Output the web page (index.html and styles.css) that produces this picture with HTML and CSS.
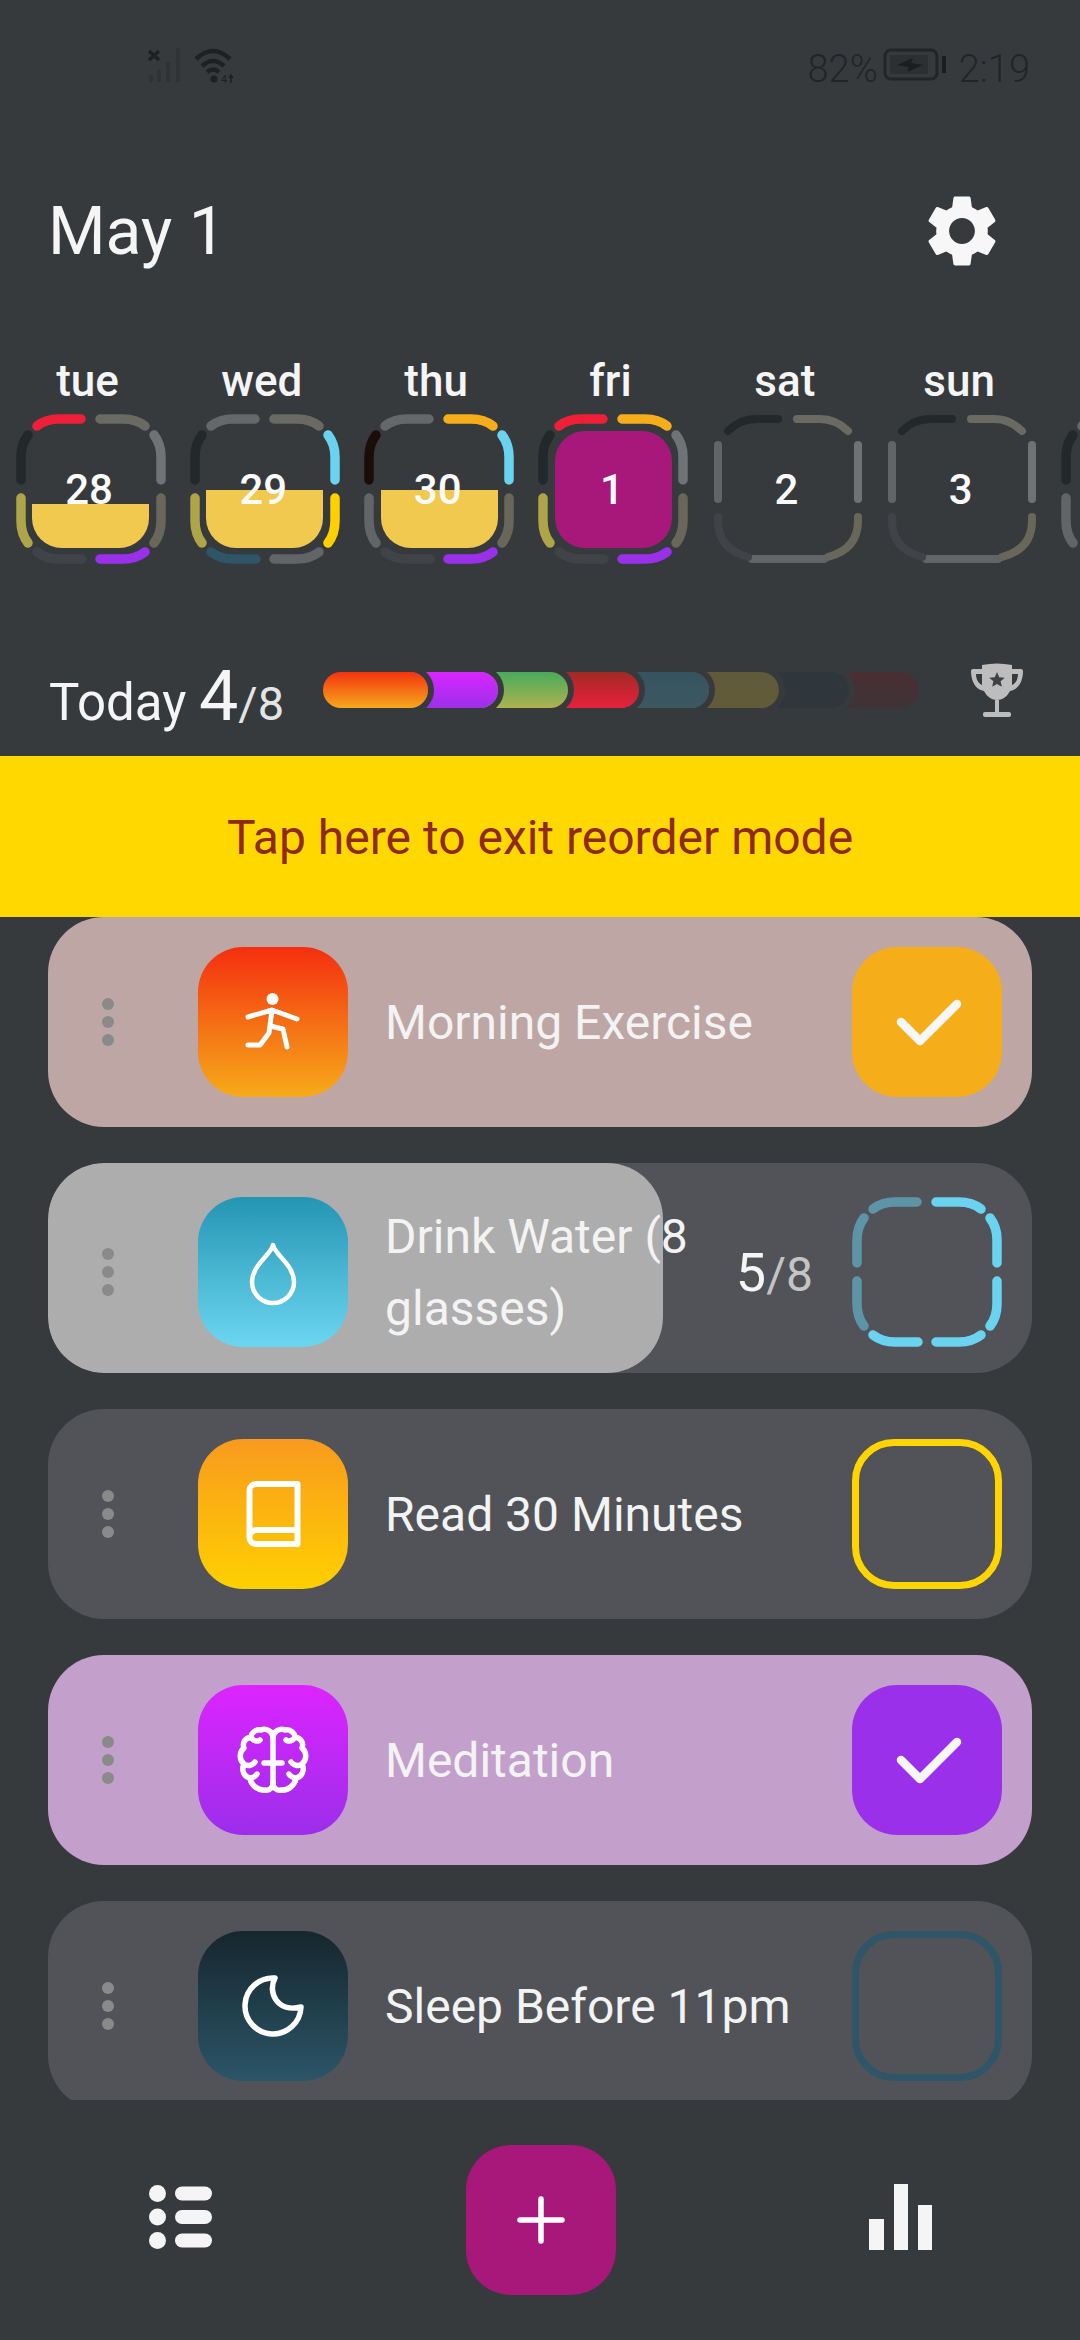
FILE: index.html
```html
<!DOCTYPE html>
<html lang="en">
<head>
  <meta charset="UTF-8">
  <title>Habits</title>
  <link rel="stylesheet" href="styles.css">
</head>
<body>
  <!-- ring pieces, shared by the day rings and the water check box -->
  <svg class="defs">
    <defs>
      <path id="a1" d="M21 12Q30 5 43 5H65"/>
      <path id="a2" d="M84 5H107Q120 5 129 12"/>
      <path id="a3" d="M138 21Q145 30 145 43V66"/>
      <path id="a4" d="M145 84V107Q145 120 138 129"/>
      <path id="a5" d="M129 138Q120 145 107 145H84"/>
      <path id="a6" d="M66 145H43Q30 145 21 138"/>
      <path id="a7" d="M12 129Q5 120 5 107V84"/>
      <path id="a8" d="M5 66V43Q5 30 12 21"/>
      <path id="b1" d="M15 17Q27 5 43 5H65"/>
      <path id="b2" d="M84 5H107Q123 5 135 17"/>
      <path id="b3" d="M145 31V85"/>
      <path id="b4" d="M145 103V107Q145 135 115 143"/>
      <path id="b5" d="M111 145H39"/>
      <path id="b6" d="M35 143Q5 135 5 107V103"/>
      <path id="b7" d="M5 85V31"/>
    </defs>
  </svg>

  <div class="status">
    <svg class="status-left" width="120" height="50" viewBox="0 0 120 50">
      <path class="sig-x" d="M19 11L29 20M29 11L19 20"/>
      <rect class="sig-bar" x="19" y="35" width="4" height="7"/>
      <rect class="sig-bar" x="27" y="30" width="4" height="12"/>
      <rect class="sig-bar" x="36" y="22" width="4" height="20"/>
      <rect class="sig-bar" x="46" y="8" width="4" height="34"/>
      <path class="wifi" d="M66 19Q83 3 100 19M72 26Q83 16 94 26M77 32Q83 27 89 32"/>
      <circle class="wifi-dot" cx="84" cy="39" r="3.5"/>
      <text class="wifi-tag" x="91" y="43">4</text>
      <path class="wifi-arrow" d="M101 35V43M99 38L101 35L103 38"/>
    </svg>
    <div class="status-right">
      <span>82%</span>
      <svg class="batt-icon" width="64" height="34" viewBox="0 0 64 34">
        <rect class="batt" x="2" y="2" width="52" height="29" rx="6"/>
        <rect class="batt-fill" x="7" y="7" width="38" height="19"/>
        <path class="batt-bolt" d="M14 17L30 10L28 15L40 17L24 24L26 19Z"/>
        <rect class="batt-tip" x="59" y="8" width="4" height="17"/>
      </svg>
      <span>2:19</span>
    </div>
  </div>

  <div class="header">
    <h1>May 1</h1>
    <svg class="gear" width="86" height="86" viewBox="0 0 24 24"><path d="M19.14 12.94c.04-.3.06-.61.06-.94 0-.32-.02-.64-.07-.94l2.03-1.58c.18-.14.23-.41.12-.61l-1.92-3.32c-.12-.22-.37-.29-.59-.22l-2.39.96c-.5-.38-1.03-.7-1.62-.94l-.36-2.54c-.04-.24-.24-.41-.48-.41h-3.84c-.24 0-.43.17-.47.41l-.36 2.54c-.59.24-1.13.57-1.62.94l-2.39-.96c-.22-.08-.47 0-.59.22L2.74 8.87c-.12.21-.08.47.12.61l2.03 1.58c-.05.3-.09.63-.09.94s.02.64.07.94l-2.03 1.58c-.18.14-.23.41-.12.61l1.92 3.32c.12.22.37.29.59.22l2.39-.96c.5.38 1.03.7 1.62.94l.36 2.54c.05.24.24.41.48.41h3.84c.24 0 .44-.17.47-.41l.36-2.54c.59-.24 1.13-.56 1.62-.94l2.39.96c.22.08.47 0 .59-.22l1.92-3.32c.12-.22.07-.47-.12-.61l-2.01-1.58zM12 15.6c-1.98 0-3.6-1.62-3.6-3.6s1.62-3.6 3.6-3.6 3.6 1.62 3.6 3.6-1.62 3.6-3.6 3.6z"/></svg>
  </div>

  <div class="days">
    <div class="day">
      <div class="day-name">tue</div>
      <div class="day-ring">
        <svg class="ring" viewBox="0 0 150 150">
          <use href="#a1" class="red"/><use href="#a2" class="olive"/><use href="#a3" class="steel"/><use href="#a4" class="khaki"/>
          <use href="#a5" class="purple"/><use href="#a6" class="faint"/><use href="#a7" class="lime"/><use href="#a8" class="coal"/>
        </svg>
        <div class="day-inner"><div class="day-fill" style="height:44px"></div></div>
        <div class="day-num">28</div>
      </div>
    </div>
    <div class="day">
      <div class="day-name">wed</div>
      <div class="day-ring">
        <svg class="ring" viewBox="0 0 150 150">
          <use href="#a1" class="ash"/><use href="#a2" class="olive"/><use href="#a3" class="sky"/><use href="#a4" class="gold"/>
          <use href="#a5" class="grey"/><use href="#a6" class="navy"/><use href="#a7" class="lime"/><use href="#a8" class="coal"/>
        </svg>
        <div class="day-inner"><div class="day-fill" style="height:58px"></div></div>
        <div class="day-num">29</div>
      </div>
    </div>
    <div class="day">
      <div class="day-name">thu</div>
      <div class="day-ring">
        <svg class="ring" viewBox="0 0 150 150">
          <use href="#a1" class="ash"/><use href="#a2" class="orange"/><use href="#a3" class="sky"/><use href="#a4" class="khaki"/>
          <use href="#a5" class="purple"/><use href="#a6" class="faint"/><use href="#a7" class="grey"/><use href="#a8" class="black"/>
        </svg>
        <div class="day-inner"><div class="day-fill" style="height:58px"></div></div>
        <div class="day-num">30</div>
      </div>
    </div>
    <div class="day">
      <div class="day-name">fri</div>
      <div class="day-ring">
        <svg class="ring" viewBox="0 0 150 150">
          <use href="#a1" class="red"/><use href="#a2" class="orange"/><use href="#a3" class="steel"/><use href="#a4" class="khaki"/>
          <use href="#a5" class="purple"/><use href="#a6" class="faint"/><use href="#a7" class="lime"/><use href="#a8" class="coal"/>
        </svg>
        <div class="day-inner today-box"></div>
        <div class="day-num">1</div>
      </div>
    </div>
    <div class="day">
      <div class="day-name">sat</div>
      <div class="day-ring">
        <svg class="ring thin" viewBox="0 0 150 150">
          <use href="#b1" class="coal"/><use href="#b2" class="olive"/><use href="#b3" class="steel"/><use href="#b4" class="khaki"/>
          <use href="#b5" class="grey"/><use href="#b6" class="faint"/><use href="#b7" class="grey"/>
        </svg>
        <div class="day-num">2</div>
      </div>
    </div>
    <div class="day">
      <div class="day-name">sun</div>
      <div class="day-ring">
        <svg class="ring thin" viewBox="0 0 150 150">
          <use href="#b1" class="coal"/><use href="#b2" class="olive"/><use href="#b3" class="steel"/><use href="#b4" class="khaki"/>
          <use href="#b5" class="grey"/><use href="#b6" class="faint"/><use href="#b7" class="grey"/>
        </svg>
        <div class="day-num">3</div>
      </div>
    </div>
    <div class="day">
      <div class="day-name">&nbsp;</div>
      <div class="day-ring">
        <svg class="ring" viewBox="0 0 150 150">
          <use href="#a1" class="ash"/><use href="#a7" class="grey"/><use href="#a8" class="coal"/>
        </svg>
      </div>
    </div>
  </div>

  <div class="today">
    <div class="today-text">Today <span class="today-done">4</span><span class="today-total">/8</span></div>
    <div class="bar">
      <div class="seg seg-1"></div>
      <div class="seg seg-2"></div>
      <div class="seg seg-3"></div>
      <div class="seg seg-4"></div>
      <div class="seg seg-5"></div>
      <div class="seg seg-6"></div>
      <div class="seg seg-7"></div>
      <div class="seg seg-8"></div>
    </div>
    <svg class="trophy" width="52" height="54" viewBox="0 0 52 54">
      <path class="cup" d="M11 2Q26-1 41 2V6H50Q52 6 52 8C52 20 46 27 39 28C36 34 31 37 26 37C21 37 16 34 13 28C6 27 0 20 0 8Q0 6 2 6H11Z"/>
      <path class="cup-hole" d="M5 11H11V22C7 20 5 16 5 11ZM47 11H41V22C45 20 47 16 47 11Z"/>
      <path class="cup-star" d="M26 9L28.2 14.2L33.8 14.7L29.6 18.3L30.9 23.8L26 20.9L21.1 23.8L22.4 18.3L18.2 14.7L23.8 14.2Z"/>
      <rect class="cup" x="24" y="37" width="4" height="12"/>
      <rect class="cup" x="12" y="49" width="28" height="5" rx="2"/>
    </svg>
  </div>

  <div class="banner">Tap here to exit reorder mode</div>

  <div class="list">
    <div class="row row-done-orange">
      <div class="dots"><i></i><i></i><i></i></div>
      <div class="icon icon-run">
        <svg viewBox="0 0 150 150">
          <circle class="glyph-fill" cx="74.5" cy="52" r="6"/>
          <path class="glyph" d="M50 70L74 63L99 72M74 63L71 86L62 98H50M72 79L85 82L89 100"/>
        </svg>
      </div>
      <div class="name">Morning Exercise</div>
      <div class="check check-orange">
        <svg viewBox="0 0 150 150"><path class="tick" d="M49 75L68 94L105 57"/></svg>
      </div>
    </div>

    <div class="row row-shifted">
      <div class="progress" style="width:615px"></div>
      <div class="dots"><i></i><i></i><i></i></div>
      <div class="icon icon-water">
        <svg viewBox="0 0 150 150"><path class="glyph" d="M75 48C73 58 54 68 54 85A21 21 0 0 0 96 85C96 68 77 58 75 48Z"/></svg>
      </div>
      <div class="name">Drink Water (8 glasses)</div>
      <div class="count"><span class="count-done">5</span>/8</div>
      <div class="check">
        <svg class="ring" viewBox="0 0 150 150">
          <use href="#a1" class="sky-dim"/><use href="#a2" class="sky"/><use href="#a3" class="sky"/><use href="#a4" class="sky"/>
          <use href="#a5" class="sky"/><use href="#a6" class="sky"/><use href="#a7" class="sky-dim"/><use href="#a8" class="sky-dim"/>
        </svg>
      </div>
    </div>

    <div class="row">
      <div class="dots"><i></i><i></i><i></i></div>
      <div class="icon icon-book">
        <svg viewBox="0 0 150 150"><path class="glyph" d="M58 45H99.5V105H58A6.5 6.5 0 0 1 51.5 98.5V51.5A6.5 6.5 0 0 1 58 45ZM51.5 98.5A7 7 0 0 1 58 91H99.5"/></svg>
      </div>
      <div class="name">Read 30 Minutes</div>
      <div class="check check-line-gold"></div>
    </div>

    <div class="row row-done-purple">
      <div class="dots"><i></i><i></i><i></i></div>
      <div class="icon icon-brain">
        <svg viewBox="0 0 150 150">
          <path id="brain-half" class="glyph" d="M75 53C75 46 68 43 63 45C58 44 53 48 53 52C47 53 44 58 46 63C41 67 41 75 46 79C43 85 46 92 52 93C53 100 60 106 67 105C72 106 75 102 75 98M53 52C55 56 60 57 62 55M46 79C50 82 55 80 57 77M52 93C55 93 58 91 59 89"/>
          <use href="#brain-half" transform="matrix(-1 0 0 1 150 0)"/>
          <path class="glyph" d="M75 53V98M66 78H84"/>
        </svg>
      </div>
      <div class="name">Meditation</div>
      <div class="check check-purple">
        <svg viewBox="0 0 150 150"><path class="tick" d="M49 75L68 94L105 57"/></svg>
      </div>
    </div>

    <div class="row">
      <div class="dots"><i></i><i></i><i></i></div>
      <div class="icon icon-moon">
        <svg viewBox="0 0 150 150"><path class="glyph" d="M77 47A28 28 0 1 0 103 76C80 82 69 62 77 47Z"/></svg>
      </div>
      <div class="name">Sleep Before 11pm</div>
      <div class="check check-line-navy"></div>
    </div>
  </div>

  <div class="nav">
    <svg class="nav-icon" width="63" height="64" viewBox="0 0 63 64">
      <circle cx="8.5" cy="8.5" r="8.5"/><circle cx="8.5" cy="32" r="8.5"/><circle cx="8.5" cy="55.5" r="8.5"/>
      <rect x="26" y="1.5" width="37" height="14" rx="7"/><rect x="26" y="25" width="37" height="14" rx="7"/><rect x="26" y="48.5" width="37" height="14" rx="7"/>
    </svg>
    <div class="add">
      <svg width="48" height="48" viewBox="0 0 48 48"><path d="M24 3V45M3 24H45"/></svg>
    </div>
    <svg class="nav-icon" width="63" height="66" viewBox="0 0 63 66">
      <rect x="0" y="35" width="15" height="31"/><rect x="25" y="0" width="14" height="66"/><rect x="49" y="21" width="14" height="45"/>
    </svg>
  </div>
</body>
</html>
```

FILE: styles.css
```css
* {
  box-sizing: border-box;
}

body {
  margin: 0;
  width: 1080px;
  height: 2340px;
  overflow: hidden;
  display: flex;
  flex-direction: column;
  font-family: Roboto, "Noto Sans", sans-serif;
  background-color: #373a3d;
  color: #f5f5f5;
}

.defs {
  display: none;
}

/* status bar */
.status {
  display: flex;
  justify-content: space-between;
  align-items: center;
  height: 50px;
  margin-top: 40px;
  padding: 0 50px 0 130px;
  flex-shrink: 0;
}

.status-right {
  display: flex;
  align-items: center;
  gap: 5px;
  font-size: 38px;
  font-weight: 300;
  color: #222528;
}

.status-right span {
  padding-top: 7px;
}

.batt-icon {
  margin-right: 7px;
}

.sig-x {
  fill: none;
  stroke: #1e2123;
  stroke-width: 3.5;
}

.sig-bar {
  fill: #2f3336;
}

.wifi {
  fill: none;
  stroke: #1e2123;
  stroke-width: 4.5;
}

.wifi-dot {
  fill: #1e2123;
}

.wifi-tag {
  font-size: 11px;
  fill: #1e2123;
}

.wifi-arrow {
  fill: none;
  stroke: #1e2123;
  stroke-width: 1.5;
}

.batt {
  fill: none;
  stroke: #222528;
  stroke-width: 3;
}

.batt-fill {
  fill: #2d3033;
}

.batt-bolt,
.batt-tip {
  fill: #1b1d1f;
}

/* date header */
.header {
  display: flex;
  justify-content: space-between;
  align-items: center;
  height: 96px;
  margin-top: 93px;
  padding: 0 75px 0 48px;
  flex-shrink: 0;
}

h1 {
  margin: 0;
  font-size: 66px;
  font-weight: 400;
}

.gear {
  fill: #f7f7f7;
}

/* day strip */
.days {
  display: flex;
  gap: 24.33px;
  margin-top: 76px;
  padding-left: 15.5px;
  overflow: hidden;
  flex-shrink: 0;
}

.day {
  width: 150px;
  flex-shrink: 0;
}

.day-name {
  padding-right: 6px;
  font-size: 44px;
  font-weight: 500;
  line-height: 52px;
  text-align: center;
  margin-bottom: 7px;
}

.day-ring {
  display: grid;
  place-items: center;
  width: 150px;
  height: 150px;
}

.day-ring > * {
  grid-area: 1 / 1;
}

.ring {
  width: 150px;
  height: 150px;
  fill: none;
  stroke-width: 9.5;
  stroke-linecap: round;
}

.ring.thin {
  stroke-width: 8;
}

.day-inner {
  display: flex;
  align-items: flex-end;
  width: 117px;
  height: 117px;
  border-radius: 30px;
  overflow: hidden;
}

.today-box {
  background: #a8177a;
}

.day-fill {
  width: 100%;
  background: #f2c94f;
}

.day-num {
  padding-right: 3px;
  font-size: 42px;
  font-weight: 500;
  color: #fbfbfb;
}

.red { stroke: #ee2038; }
.orange { stroke: #f5ae1a; }
.purple { stroke: #9a30ea; }
.gold { stroke: #ffd000; }
.sky { stroke: #6ad3ef; }
.sky-dim { stroke: #5d94a6; }
.lime { stroke: #aea448; }
.navy { stroke: #2e5568; }
.olive { stroke: #6a6a62; }
.khaki { stroke: #69675a; }
.steel { stroke: #6f7376; }
.ash { stroke: #666768; }
.grey { stroke: #616568; }
.faint { stroke: #404347; }
.coal { stroke: #23282b; }
.black { stroke: #1a0e08; }

/* today summary */
.today {
  display: flex;
  align-items: center;
  height: 72px;
  margin-top: 90px;
  padding-left: 49px;
  flex-shrink: 0;
}

.today-text {
  width: 231px;
  margin-right: 43px;
  padding-top: 12px;
  font-size: 51px;
  white-space: nowrap;
}

.today-done {
  font-size: 70px;
}

.today-total {
  font-size: 47px;
  color: #e4e4e4;
}

.bar {
  display: flex;
  height: 36px;
}

.seg {
  position: relative;
  width: 100.2px;
  margin-left: -30px;
  border-radius: 18px;
  box-shadow: 0 0 0 6px #373a3d;
}

.seg-1 { width: 105px; margin-left: 0; z-index: 8; background: linear-gradient(#f4330f, #f6a91b); }
.seg-2 { z-index: 7; background: linear-gradient(#d926ff, #9b30ea); }
.seg-3 { z-index: 6; background: linear-gradient(#48ab5c, #aeb24f); }
.seg-4 { z-index: 5; background: linear-gradient(#a12a24, #e8203c); }
.seg-5 { z-index: 4; background: linear-gradient(#355460, #3e5761); }
.seg-6 { z-index: 3; background: linear-gradient(#5f5a3a, #625b38); }
.seg-7 { z-index: 2; background: #30373c; }
.seg-8 { z-index: 1; background: linear-gradient(#4a2f34, #3e3336); }

.trophy {
  margin-left: 52px;
}

.cup {
  fill: #bdbdbd;
}

.cup-hole {
  fill: #373a3d;
}

.cup-star {
  fill: #3f4245;
}

/* reorder banner */
.banner {
  display: flex;
  justify-content: center;
  align-items: center;
  height: 161px;
  margin-top: 30px;
  padding-top: 2px;
  background: #ffd800;
  color: #8f2a1a;
  font-size: 48px;
  flex-shrink: 0;
}

/* habit list */
.list {
  flex: 1;
  display: flex;
  flex-direction: column;
  gap: 36px;
  padding: 0 48px;
  overflow: hidden;
}

.row {
  position: relative;
  display: flex;
  align-items: center;
  height: 210px;
  padding: 0 30px 0 54px;
  border-radius: 56px;
  background: #515358;
  overflow: hidden;
  flex-shrink: 0;
}

.row-done-orange {
  background: #bda6a4;
}

.row-done-purple {
  background: #c2a0cb;
}

.row-shifted {
  padding-top: 8px;
}

.progress {
  position: absolute;
  left: 0;
  top: 0;
  bottom: 0;
  border-radius: 56px;
  background: #adadad;
}

.dots {
  position: relative;
  display: flex;
  flex-direction: column;
  gap: 6px;
  width: 12px;
  margin-right: 84px;
}

.dots i {
  width: 12px;
  height: 12px;
  border-radius: 50%;
  background: #8a8a8a;
}

.icon {
  position: relative;
  width: 150px;
  height: 150px;
  margin-right: 37px;
  border-radius: 45px;
  flex-shrink: 0;
}

.icon svg,
.check svg {
  display: block;
  width: 150px;
  height: 150px;
}

.icon-run { background: linear-gradient(#f42f0f, #f6ab1a); }
.icon-water { background: linear-gradient(#2595b4, #6cd6f0); }
.icon-book { background: linear-gradient(#f89a1e, #ffd000); }
.icon-brain { background: linear-gradient(#dd24ff, #9b2eea); }
.icon-moon { background: linear-gradient(#16262d, #2b5568); }

.glyph {
  fill: none;
  stroke: #fff;
  stroke-width: 5;
  stroke-linecap: round;
  stroke-linejoin: round;
}

.icon-water .glyph {
  stroke-width: 4.5;
}

.icon-book .glyph {
  stroke-width: 6;
}

.icon-brain .glyph,
.icon-moon .glyph {
  stroke-width: 5.5;
}

.glyph-fill {
  fill: #fff;
}

.name {
  position: relative;
  flex: 1;
  padding-top: 2px;
  font-size: 48px;
  line-height: 72px;
  color: #f3f3f3;
}

.count {
  position: relative;
  margin: 0 39px 0 38px;
  font-size: 48px;
  color: #c4c4c4;
}

.count-done {
  font-size: 54px;
  color: #f5f5f5;
}

.check {
  position: relative;
  width: 150px;
  height: 150px;
  border-radius: 45px;
  flex-shrink: 0;
}

.check-orange { background: #f5ae1a; }
.check-purple { background: #9b30ea; }
.check-line-gold { border: 7px solid #ffd400; }
.check-line-navy { border: 7px solid #2e5568; }

.check-line-gold,
.check-line-navy {
  border-radius: 42px;
}

.tick {
  fill: none;
  stroke: #f7f7f7;
  stroke-width: 8.5;
  stroke-linecap: round;
  stroke-linejoin: round;
}

/* bottom nav */
.nav {
  display: flex;
  justify-content: space-between;
  align-items: center;
  height: 240px;
  padding: 0 148px 0 149px;
  flex-shrink: 0;
}

.nav-icon {
  fill: #f5f5f5;
  margin-bottom: 6px;
}

.add {
  display: flex;
  justify-content: center;
  align-items: center;
  width: 150px;
  height: 150px;
  border-radius: 45px;
  background: #a8177a;
}

.add path {
  fill: none;
  stroke: #fff;
  stroke-width: 5.5;
  stroke-linecap: round;
}
```
